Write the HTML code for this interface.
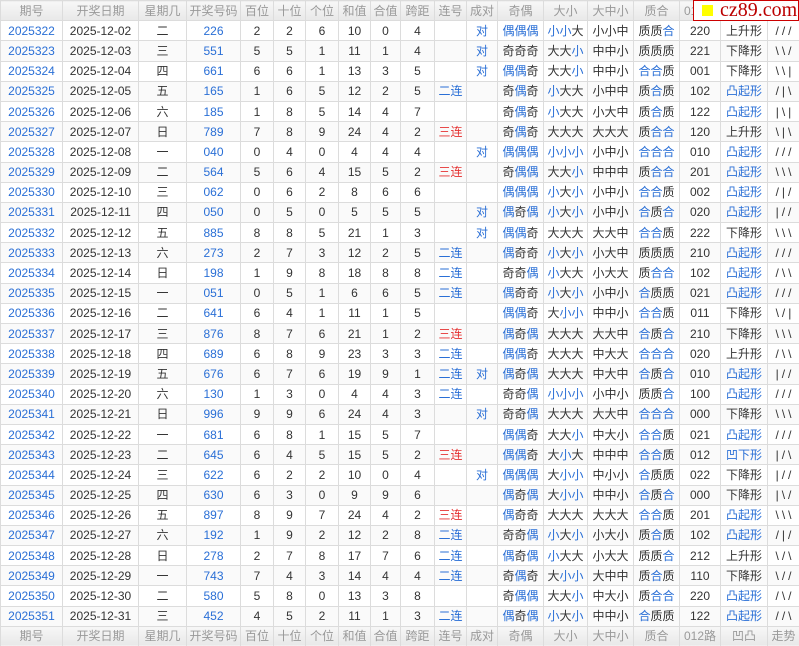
<!DOCTYPE html>
<html><head><meta charset="utf-8"><style>
*{margin:0;padding:0;box-sizing:border-box}
html,body{width:799px;height:646px;overflow:hidden;background:#fff}
body{font-family:"Liberation Sans","Noto Sans CJK SC",sans-serif;font-size:12px;color:#333;position:relative}
table{border-collapse:collapse;table-layout:fixed;width:799px;position:absolute;left:0;top:0}
td,th{border:1px solid #dcdcdc;text-align:center;white-space:nowrap;overflow:hidden;height:20.2px;padding:0;line-height:18px}
th{background:linear-gradient(#f7f7f7,#e8e8e8);color:#999;font-weight:normal}
td:first-child{color:#2a6fd6}
td:nth-child(4){color:#2a6fd6}
td:nth-child(19){letter-spacing:3px;text-indent:3px}
i{font-style:normal;color:#2a6fd6}
.b{color:#2a6fd6}.r{color:#e53333}
tbody tr:nth-child(even) td{background:#fafafa}
.wm{position:absolute;left:693px;top:0;width:106px;height:21px;background:#fff;border:1px solid #c00;font-family:"Liberation Serif",serif;color:#b00;font-size:20px;line-height:19px;padding-left:26px}
.wm:before{content:"";position:absolute;left:8px;top:4px;width:11px;height:11px;background:#ff0}
</style></head><body>
<table>
<colgroup><col style="width:62px"><col style="width:76px"><col style="width:48px"><col style="width:54px"><col style="width:33px"><col style="width:32px"><col style="width:33px"><col style="width:32px"><col style="width:30px"><col style="width:34px"><col style="width:32px"><col style="width:31px"><col style="width:46px"><col style="width:44px"><col style="width:46px"><col style="width:46px"><col style="width:41px"><col style="width:47px"><col style="width:32px"></colgroup>
<thead><tr><th>期号</th><th>开奖日期</th><th>星期几</th><th>开奖号码</th><th>百位</th><th>十位</th><th>个位</th><th>和值</th><th>合值</th><th>跨距</th><th>连号</th><th>成对</th><th>奇偶</th><th>大小</th><th>大中小</th><th>质合</th><th>012路</th><th>凹凸</th><th>走势</th></tr></thead>
<tbody>
<tr><td>2025322</td><td>2025-12-02</td><td>二</td><td>226</td><td>2</td><td>2</td><td>6</td><td>10</td><td>0</td><td>4</td><td></td><td class="b">对</td><td><i>偶偶偶</i></td><td><i>小小</i>大</td><td>小小中</td><td>质质<i>合</i></td><td>220</td><td>上升形</td><td>///</td></tr>
<tr><td>2025323</td><td>2025-12-03</td><td>三</td><td>551</td><td>5</td><td>5</td><td>1</td><td>11</td><td>1</td><td>4</td><td></td><td class="b">对</td><td>奇奇奇</td><td>大大<i>小</i></td><td>中中小</td><td>质质质</td><td>221</td><td>下降形</td><td>\\/</td></tr>
<tr><td>2025324</td><td>2025-12-04</td><td>四</td><td>661</td><td>6</td><td>6</td><td>1</td><td>13</td><td>3</td><td>5</td><td></td><td class="b">对</td><td><i>偶偶</i>奇</td><td>大大<i>小</i></td><td>中中小</td><td><i>合合</i>质</td><td>001</td><td>下降形</td><td>\\|</td></tr>
<tr><td>2025325</td><td>2025-12-05</td><td>五</td><td>165</td><td>1</td><td>6</td><td>5</td><td>12</td><td>2</td><td>5</td><td class="b">二连</td><td></td><td>奇<i>偶</i>奇</td><td><i>小</i>大大</td><td>小中中</td><td>质<i>合</i>质</td><td>102</td><td class="b">凸起形</td><td>/|\</td></tr>
<tr><td>2025326</td><td>2025-12-06</td><td>六</td><td>185</td><td>1</td><td>8</td><td>5</td><td>14</td><td>4</td><td>7</td><td></td><td></td><td>奇<i>偶</i>奇</td><td><i>小</i>大大</td><td>小大中</td><td>质<i>合</i>质</td><td>122</td><td class="b">凸起形</td><td>|\|</td></tr>
<tr><td>2025327</td><td>2025-12-07</td><td>日</td><td>789</td><td>7</td><td>8</td><td>9</td><td>24</td><td>4</td><td>2</td><td class="r">三连</td><td></td><td>奇<i>偶</i>奇</td><td>大大大</td><td>大大大</td><td>质<i>合合</i></td><td>120</td><td>上升形</td><td>\|\</td></tr>
<tr><td>2025328</td><td>2025-12-08</td><td>一</td><td>040</td><td>0</td><td>4</td><td>0</td><td>4</td><td>4</td><td>4</td><td></td><td class="b">对</td><td><i>偶偶偶</i></td><td><i>小小小</i></td><td>小中小</td><td><i>合合合</i></td><td>010</td><td class="b">凸起形</td><td>///</td></tr>
<tr><td>2025329</td><td>2025-12-09</td><td>二</td><td>564</td><td>5</td><td>6</td><td>4</td><td>15</td><td>5</td><td>2</td><td class="r">三连</td><td></td><td>奇<i>偶偶</i></td><td>大大<i>小</i></td><td>中中中</td><td>质<i>合合</i></td><td>201</td><td class="b">凸起形</td><td>\\\</td></tr>
<tr><td>2025330</td><td>2025-12-10</td><td>三</td><td>062</td><td>0</td><td>6</td><td>2</td><td>8</td><td>6</td><td>6</td><td></td><td></td><td><i>偶偶偶</i></td><td><i>小</i>大<i>小</i></td><td>小中小</td><td><i>合合</i>质</td><td>002</td><td class="b">凸起形</td><td>/|/</td></tr>
<tr><td>2025331</td><td>2025-12-11</td><td>四</td><td>050</td><td>0</td><td>5</td><td>0</td><td>5</td><td>5</td><td>5</td><td></td><td class="b">对</td><td><i>偶</i>奇<i>偶</i></td><td><i>小</i>大<i>小</i></td><td>小中小</td><td><i>合</i>质<i>合</i></td><td>020</td><td class="b">凸起形</td><td>|//</td></tr>
<tr><td>2025332</td><td>2025-12-12</td><td>五</td><td>885</td><td>8</td><td>8</td><td>5</td><td>21</td><td>1</td><td>3</td><td></td><td class="b">对</td><td><i>偶偶</i>奇</td><td>大大大</td><td>大大中</td><td><i>合合</i>质</td><td>222</td><td>下降形</td><td>\\\</td></tr>
<tr><td>2025333</td><td>2025-12-13</td><td>六</td><td>273</td><td>2</td><td>7</td><td>3</td><td>12</td><td>2</td><td>5</td><td class="b">二连</td><td></td><td><i>偶</i>奇奇</td><td><i>小</i>大<i>小</i></td><td>小大中</td><td>质质质</td><td>210</td><td class="b">凸起形</td><td>///</td></tr>
<tr><td>2025334</td><td>2025-12-14</td><td>日</td><td>198</td><td>1</td><td>9</td><td>8</td><td>18</td><td>8</td><td>8</td><td class="b">二连</td><td></td><td>奇奇<i>偶</i></td><td><i>小</i>大大</td><td>小大大</td><td>质<i>合合</i></td><td>102</td><td class="b">凸起形</td><td>/\\</td></tr>
<tr><td>2025335</td><td>2025-12-15</td><td>一</td><td>051</td><td>0</td><td>5</td><td>1</td><td>6</td><td>6</td><td>5</td><td class="b">二连</td><td></td><td><i>偶</i>奇奇</td><td><i>小</i>大<i>小</i></td><td>小中小</td><td><i>合</i>质质</td><td>021</td><td class="b">凸起形</td><td>///</td></tr>
<tr><td>2025336</td><td>2025-12-16</td><td>二</td><td>641</td><td>6</td><td>4</td><td>1</td><td>11</td><td>1</td><td>5</td><td></td><td></td><td><i>偶偶</i>奇</td><td>大<i>小小</i></td><td>中中小</td><td><i>合合</i>质</td><td>011</td><td>下降形</td><td>\/|</td></tr>
<tr><td>2025337</td><td>2025-12-17</td><td>三</td><td>876</td><td>8</td><td>7</td><td>6</td><td>21</td><td>1</td><td>2</td><td class="r">三连</td><td></td><td><i>偶</i>奇<i>偶</i></td><td>大大大</td><td>大大中</td><td><i>合</i>质<i>合</i></td><td>210</td><td>下降形</td><td>\\\</td></tr>
<tr><td>2025338</td><td>2025-12-18</td><td>四</td><td>689</td><td>6</td><td>8</td><td>9</td><td>23</td><td>3</td><td>3</td><td class="b">二连</td><td></td><td><i>偶偶</i>奇</td><td>大大大</td><td>中大大</td><td><i>合合合</i></td><td>020</td><td>上升形</td><td>/\\</td></tr>
<tr><td>2025339</td><td>2025-12-19</td><td>五</td><td>676</td><td>6</td><td>7</td><td>6</td><td>19</td><td>9</td><td>1</td><td class="b">二连</td><td class="b">对</td><td><i>偶</i>奇<i>偶</i></td><td>大大大</td><td>中大中</td><td><i>合</i>质<i>合</i></td><td>010</td><td class="b">凸起形</td><td>|//</td></tr>
<tr><td>2025340</td><td>2025-12-20</td><td>六</td><td>130</td><td>1</td><td>3</td><td>0</td><td>4</td><td>4</td><td>3</td><td class="b">二连</td><td></td><td>奇奇<i>偶</i></td><td><i>小小小</i></td><td>小中小</td><td>质质<i>合</i></td><td>100</td><td class="b">凸起形</td><td>///</td></tr>
<tr><td>2025341</td><td>2025-12-21</td><td>日</td><td>996</td><td>9</td><td>9</td><td>6</td><td>24</td><td>4</td><td>3</td><td></td><td class="b">对</td><td>奇奇<i>偶</i></td><td>大大大</td><td>大大中</td><td><i>合合合</i></td><td>000</td><td>下降形</td><td>\\\</td></tr>
<tr><td>2025342</td><td>2025-12-22</td><td>一</td><td>681</td><td>6</td><td>8</td><td>1</td><td>15</td><td>5</td><td>7</td><td></td><td></td><td><i>偶偶</i>奇</td><td>大大<i>小</i></td><td>中大小</td><td><i>合合</i>质</td><td>021</td><td class="b">凸起形</td><td>///</td></tr>
<tr><td>2025343</td><td>2025-12-23</td><td>二</td><td>645</td><td>6</td><td>4</td><td>5</td><td>15</td><td>5</td><td>2</td><td class="r">三连</td><td></td><td><i>偶偶</i>奇</td><td>大<i>小</i>大</td><td>中中中</td><td><i>合合</i>质</td><td>012</td><td class="b">凹下形</td><td>|/\</td></tr>
<tr><td>2025344</td><td>2025-12-24</td><td>三</td><td>622</td><td>6</td><td>2</td><td>2</td><td>10</td><td>0</td><td>4</td><td></td><td class="b">对</td><td><i>偶偶偶</i></td><td>大<i>小小</i></td><td>中小小</td><td><i>合</i>质质</td><td>022</td><td>下降形</td><td>|//</td></tr>
<tr><td>2025345</td><td>2025-12-25</td><td>四</td><td>630</td><td>6</td><td>3</td><td>0</td><td>9</td><td>9</td><td>6</td><td></td><td></td><td><i>偶</i>奇<i>偶</i></td><td>大<i>小小</i></td><td>中中小</td><td><i>合</i>质<i>合</i></td><td>000</td><td>下降形</td><td>|\/</td></tr>
<tr><td>2025346</td><td>2025-12-26</td><td>五</td><td>897</td><td>8</td><td>9</td><td>7</td><td>24</td><td>4</td><td>2</td><td class="r">三连</td><td></td><td><i>偶</i>奇奇</td><td>大大大</td><td>大大大</td><td><i>合合</i>质</td><td>201</td><td class="b">凸起形</td><td>\\\</td></tr>
<tr><td>2025347</td><td>2025-12-27</td><td>六</td><td>192</td><td>1</td><td>9</td><td>2</td><td>12</td><td>2</td><td>8</td><td class="b">二连</td><td></td><td>奇奇<i>偶</i></td><td><i>小</i>大<i>小</i></td><td>小大小</td><td>质<i>合</i>质</td><td>102</td><td class="b">凸起形</td><td>/|/</td></tr>
<tr><td>2025348</td><td>2025-12-28</td><td>日</td><td>278</td><td>2</td><td>7</td><td>8</td><td>17</td><td>7</td><td>6</td><td class="b">二连</td><td></td><td><i>偶</i>奇<i>偶</i></td><td><i>小</i>大大</td><td>小大大</td><td>质质<i>合</i></td><td>212</td><td>上升形</td><td>\/\</td></tr>
<tr><td>2025349</td><td>2025-12-29</td><td>一</td><td>743</td><td>7</td><td>4</td><td>3</td><td>14</td><td>4</td><td>4</td><td class="b">二连</td><td></td><td>奇<i>偶</i>奇</td><td>大<i>小小</i></td><td>大中中</td><td>质<i>合</i>质</td><td>110</td><td>下降形</td><td>\//</td></tr>
<tr><td>2025350</td><td>2025-12-30</td><td>二</td><td>580</td><td>5</td><td>8</td><td>0</td><td>13</td><td>3</td><td>8</td><td></td><td></td><td>奇<i>偶偶</i></td><td>大大<i>小</i></td><td>中大小</td><td>质<i>合合</i></td><td>220</td><td class="b">凸起形</td><td>/\/</td></tr>
<tr><td>2025351</td><td>2025-12-31</td><td>三</td><td>452</td><td>4</td><td>5</td><td>2</td><td>11</td><td>1</td><td>3</td><td class="b">二连</td><td></td><td><i>偶</i>奇<i>偶</i></td><td><i>小</i>大<i>小</i></td><td>中中小</td><td><i>合</i>质质</td><td>122</td><td class="b">凸起形</td><td>//\</td></tr>
</tbody>
<tfoot><tr><th>期号</th><th>开奖日期</th><th>星期几</th><th>开奖号码</th><th>百位</th><th>十位</th><th>个位</th><th>和值</th><th>合值</th><th>跨距</th><th>连号</th><th>成对</th><th>奇偶</th><th>大小</th><th>大中小</th><th>质合</th><th>012路</th><th>凹凸</th><th>走势</th></tr></tfoot>
</table>
<div class="wm">cz89.com</div>
</body></html>
